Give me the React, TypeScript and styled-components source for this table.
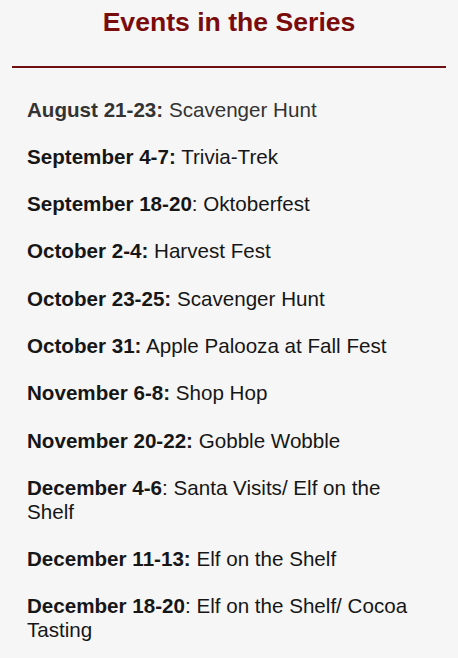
import styled, { createGlobalStyle } from 'styled-components';

const GlobalStyle = createGlobalStyle`
  html, body {
    margin: 0;
    padding: 0;
    background: #f6f6f6;
  }
  body {
    font-family: "Liberation Sans", Arial, sans-serif;
  }
`;

const Page = styled.div`
  width: 458px;
  min-height: 658px;
  background: #f6f6f6;
  padding: 6px 12px 0;
  box-sizing: border-box;
`;

const Title = styled.h2`
  margin: 0;
  text-align: center;
  font-size: 26.6px;
  line-height: 32px;
  font-weight: 700;
  color: #7a0b0b;
`;

const Rule = styled.hr`
  margin: 28px 0 0;
  border: none;
  border-top: 2px solid #6e1010;
`;

const List = styled.div`
  padding: 29.5px 22px 0 15px;
`;

const Item = styled.p<{ $muted?: boolean }>`
  margin: 0 0 23.65px;
  font-size: 20.6px;
  line-height: 23.65px;
  color: ${({ $muted }) => ($muted ? '#333' : '#161616')};
`;

const Date = styled.strong`
  font-weight: 700;
`;

const events: { date: string; colonBold: boolean; name: string }[] = [
  { date: 'August 21-23', colonBold: true, name: 'Scavenger Hunt' },
  { date: 'September 4-7', colonBold: true, name: 'Trivia-Trek' },
  { date: 'September 18-20', colonBold: false, name: 'Oktoberfest' },
  { date: 'October 2-4', colonBold: true, name: 'Harvest Fest' },
  { date: 'October 23-25', colonBold: true, name: 'Scavenger Hunt' },
  { date: 'October 31', colonBold: true, name: 'Apple Palooza at Fall Fest' },
  { date: 'November 6-8', colonBold: true, name: 'Shop Hop' },
  { date: 'November 20-22', colonBold: true, name: 'Gobble Wobble' },
  { date: 'December 4-6', colonBold: false, name: 'Santa Visits/ Elf on the Shelf' },
  { date: 'December 11-13', colonBold: true, name: 'Elf on the Shelf' },
  { date: 'December 18-20', colonBold: false, name: 'Elf on the Shelf/ Cocoa Tasting' },
];

export default function App() {
  return (
    <>
      <GlobalStyle />
      <Page>
        <Title>Events in the Series</Title>
        <Rule />
        <List>
          {events.map((ev, i) => (
            <Item key={i} $muted={i === 0}>
              {ev.colonBold ? (
                <>
                  <Date>{ev.date}:</Date> {ev.name}
                </>
              ) : (
                <>
                  <Date>{ev.date}</Date>: {ev.name}
                </>
              )}
            </Item>
          ))}
        </List>
      </Page>
    </>
  );
}
